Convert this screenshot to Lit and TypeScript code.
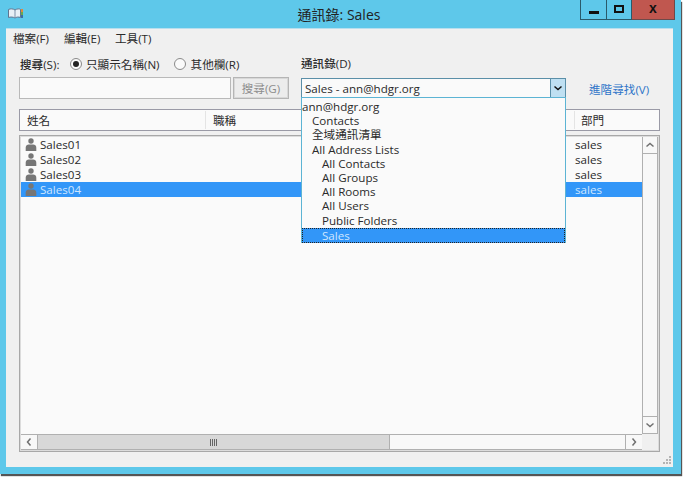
import { LitElement, html, css, svg } from "lit";
import { customElement } from "lit/decorators.js";

const chevron = (dir: string, color = "#707070") => {
  const pts: Record<string, string> = {
    up: "1.5,5.5 5,2.5 8.5,5.5",
    down: "1.5,2.5 5,5.5 8.5,2.5",
    left: "5.5,1.5 2.5,5 5.5,8.5",
    right: "2.5,1.5 5.5,5 2.5,8.5",
  };
  const size = dir === "up" || dir === "down" ? { w: 10, h: 8 } : { w: 8, h: 10 };
  return html`<svg width=${size.w} height=${size.h} viewBox="0 0 ${size.w} ${size.h}">
    ${svg`<polyline points=${pts[dir]} fill="none" stroke=${color} stroke-width="1.5"/>`}
  </svg>`;
};

const person = html`<svg class="person" width="12" height="13" viewBox="0 0 12 13">
  <circle cx="6" cy="3" r="2.7" fill="#767676"/>
  <path d="M.7 13v-3.2C.7 7.8 2.2 6.6 3.8 6.6h4.4c1.6 0 3.1 1.2 3.1 3.2V13z" fill="#767676"/>
</svg>`;

@customElement("app-root")
export class AppRoot extends LitElement {
  static styles = css`
    :host {
      display: block;
      width: 684px;
      height: 478px;
      background: #fff;
      font-family: "Open Sans", "Noto Sans CJK TC", sans-serif;
      font-size: 11.6px;
      color: #2a2a2a;
      overflow: hidden;
    }
    .window {
      width: 681px;
      height: 474px;
      box-sizing: border-box;
      background: #5ec8ea;
      padding: 0 8px 7px 6px;
      display: flex;
      flex-direction: column;
      box-shadow: 1px 2px 1px #555;
    }
    .titlebar {
      height: 28px;
      flex: none;
      display: grid;
      grid-template-columns: 1fr auto 1fr;
      margin-left: -6px;
      margin-right: -8px;
    }
    .book { margin: 8px 0 0 8px; display: block; }
    .title {
      font-size: 14px;
      line-height: 18px;
      padding-top: 6px;
      color: #222;
      margin-right: 3px;
    }
    .caption { display: flex; justify-content: flex-end; padding-right: 6px; align-items: flex-start; }
    .cbtn {
      height: 20px;
      box-sizing: border-box;
      border: 1px solid #2a5a6a;
      border-top: none;
      display: flex;
      align-items: center;
      justify-content: center;
    }
    .cbtn + .cbtn { border-left: none; }
    .min { width: 27px; }
    .min i { display: block; width: 10px; height: 3px; background: #111; margin-top: 5px; }
    .max { width: 25px; }
    .max i { display: block; width: 10px; height: 8px; box-sizing: border-box; border: 2px solid #111; margin-bottom: 2px; }
    .close { width: 43px; background: #c0574f; border-color: #6e4a4a; font: bold 14px/1 "Liberation Sans", sans-serif; color: #111; padding-bottom: 3px; }

    .body {
      flex: 1;
      min-height: 0;
      background: #f0f0f0;
      border-top: 1px solid #b8dfee;
      padding: 0 13px 15px 13px;
      display: flex;
      flex-direction: column;
    }
    .menu { display: flex; height: 18px; margin-left: -6px; align-items: center; flex: none; }
    .menu span { white-space: nowrap; width: 51px; }

    .toolbar { display: flex; margin-top: 9px; flex: none; }
    .left { width: 282px; flex: none; }
    .opts { display: flex; align-items: center; height: 16px; white-space: nowrap; }
    .label { font-weight: 500; width: 50px; padding-left: 1px; }
    .radio { display: flex; align-items: center; gap: 4px; }
    .radio + .radio { margin-left: 14px; }
    .radio + .radio .dot { margin-right: 1px; }
    .dot {
      width: 12px; height: 12px; box-sizing: border-box;
      border: 1px solid #8a8a8a; border-radius: 50%; background: #fafafa;
      display: flex; align-items: center; justify-content: center;
    }
    .dot.on::after { content: ""; width: 6px; height: 6px; border-radius: 50%; background: #222; }
    .searchrow { display: flex; gap: 2px; margin-top: 5px; }
    .input { width: 212px; height: 22px; box-sizing: border-box; background: #fafafa; border: 1px solid #b9b9b9; }
    .btn {
      width: 56px; height: 22px; box-sizing: border-box;
      border: 1px solid #b5b5b5; background: #ececec; outline: 1px solid #d8d8d8; outline-offset: -2px;
      color: #8c8c8c; display: flex; align-items: center; justify-content: center; white-space: nowrap;
    }
    .right { flex: none; }
    .rlabel { height: 16px; line-height: 16px; font-weight: 500; white-space: nowrap; }
    .comborow { display: flex; align-items: center; margin-top: 6px; }
    .combo {
      position: relative;
      width: 265px; height: 20px; box-sizing: border-box;
      background: #fafafa; border: 1px solid #5b8fa8;
      border-bottom-color: #3f97c4;
      display: flex; align-items: center;
    }
    .combo .val { flex: 1; padding-left: 3px; white-space: nowrap; }
    .combo .arrow {
      width: 15px; height: 18px; box-sizing: border-box; background: #bfe0f2; border-left: 1px solid #5b8fa8;
      display: flex; align-items: center; justify-content: center; flex: none;
    }
    .link { color: #2e74c8; margin-left: 23px; padding-top: 1px; white-space: nowrap; }
    .drop {
      position: absolute; z-index: 3;
      left: -1px; top: 18px; width: 265px; height: 146px; box-sizing: border-box;
      background: #fafafa; border: 1px solid #5cb4d4; padding-top: 2px;
      line-height: 14.2px;
    }
    .drop div { height: 14.2px; white-space: nowrap; }
    .l1 { padding-left: 10px; }
    .l2 { padding-left: 20px; }
    .drop .sel {
      height: 15px; line-height: 15px; box-sizing: border-box;
      background: #3296f8; color: #cfe6ff; outline: 1px dotted #222; outline-offset: -1px;
    }

    .head {
      margin-top: 10px; height: 22px; box-sizing: border-box; flex: none;
      background: #fafafa; border: 1px solid #9a9aa6;
      display: flex; align-items: center;
    }
    .head div { height: 18px; line-height: 20px; box-sizing: border-box; padding-left: 7px; border-right: 1px solid #e4e4e4; }
    .c1 { width: 186px; }
    .c2 { width: 369px; }
    .c3 { flex: 1; border-right: none !important; padding-left: 6px !important; }

    .list {
      margin-top: 4px; flex: 1; min-height: 0; box-sizing: border-box;
      border: 1px solid #a8a8a8; padding: 1px;
      background: #fafafa;
      display: grid;
      grid-template-columns: 1fr 16px;
      grid-template-rows: 1fr 16px;
      outline: 1px solid #dcdcdc; outline-offset: -2px;
    }
    .rows { min-height: 0; overflow: hidden; position: relative; z-index: 1; background: #fafafa; }
    .row { display: flex; align-items: center; height: 15px; white-space: nowrap; }
    .row .person { margin-left: 4px; margin-right: 3px; flex: none; }
    .row .n { flex: 1; }
    .row .d { width: 67px; flex: none; }
    .row.sel { background: #3296f8; color: #cfe6ff; }

    .vbar { display: flex; flex-direction: column; border-left: 1px solid #b0b0b0; border-right: 1px solid #b0b0b0; justify-content: space-between; background: #f8f8f8; }
    .vbtn { height: 16px; flex: none; display: flex; align-items: center; justify-content: center; background: #f8f8f8; }
    .vbtn.top { border-bottom: 1px solid #b0b0b0; }
    .vbtn.bot { border-top: 1px solid #b0b0b0; border-bottom: 1px solid #b0b0b0; }
    .hbar { display: flex; border-top: 1px solid #b0b0b0; border-bottom: 1px solid #b0b0b0; background: #f8f8f8; box-sizing: border-box; }
    .hbtn { width: 16px; flex: none; display: flex; align-items: center; justify-content: center; }
    .hbtn.l { border-right: 1px solid #b0b0b0; }
    .hbtn.r { border-left: 1px solid #b0b0b0; margin-left: auto; }
    .thumb { width: 351px; flex: none; background: #d8d8d8; border-right: 1px solid #b0b0b0; display: flex; align-items: center; justify-content: center; gap: 1px; }
    .thumb i { display: block; width: 1px; height: 7px; background: #666; }
    .corner { background: #f0f0f0; }

    .bodywrap { flex: 1; min-height: 0; display: flex; position: relative; }
    .bodywrap .body { width: 100%; box-sizing: border-box; }
    .grip { position: absolute; right: 2px; bottom: 3px; }
  `;

  private row(name: string, sel = false) {
    return html`<div class="row ${sel ? "sel" : ""}">${person}<span class="n">${name}</span><span class="d">sales</span></div>`;
  }

  render() {
    return html`
      <div class="window">
        <div class="titlebar">
          <svg class="book" width="15" height="11" viewBox="0 0 15 11">
            <path d="M.5 1.500C2.500.5 5 .7 7 2c2-1.300 4.500-1.500 5.500-.5V9.500C10.500 8.700 8.500 9 7 10 5.500 9 2.500 8.700.5 9.500z" fill="#e8f0f6" stroke="#5f7590"/>
            <path d="M7 2v8" stroke="#7f93aa"/>
            <rect x="13" y="1" width="2" height="3" fill="#e08a3c"/>
            <rect x="13" y="4" width="2" height="3" fill="#6aa84f"/>
            <rect x="13" y="7" width="2" height="3" fill="#3a6ea5"/>
          </svg>
          <div class="title">通訊錄: Sales</div>
          <div class="caption">
            <div class="cbtn min"><i></i></div>
            <div class="cbtn max"><i></i></div>
            <div class="cbtn close">x</div>
          </div>
        </div>
        <div class="bodywrap">
          <div class="body">
            <div class="menu"><span>檔案(F)</span><span>編輯(E)</span><span>工具(T)</span></div>
            <div class="toolbar">
              <div class="left">
                <div class="opts">
                  <span class="label">搜尋(S):</span>
                  <span class="radio"><span class="dot on"></span>只顯示名稱(N)</span>
                  <span class="radio"><span class="dot"></span>其他欄(R)</span>
                </div>
                <div class="searchrow"><div class="input"></div><div class="btn">搜尋(G)</div></div>
              </div>
              <div class="right">
                <div class="rlabel">通訊錄(D)</div>
                <div class="comborow">
                  <div class="combo">
                    <span class="val">Sales - ann@hdgr.org</span>
                    <span class="arrow">${chevron("down", "#111")}</span>
                    <div class="drop">
                      <div>ann@hdgr.org</div>
                      <div class="l1">Contacts</div>
                      <div class="l1">全域通訊清單</div>
                      <div class="l1">All Address Lists</div>
                      <div class="l2">All Contacts</div>
                      <div class="l2">All Groups</div>
                      <div class="l2">All Rooms</div>
                      <div class="l2">All Users</div>
                      <div class="l2">Public Folders</div>
                      <div class="l2 sel">Sales</div>
                    </div>
                  </div>
                  <span class="link">進階尋找(V)</span>
                </div>
              </div>
            </div>
            <div class="head"><div class="c1">姓名</div><div class="c2">職稱</div><div class="c3">部門</div></div>
            <div class="list">
              <div class="rows">
                ${this.row("Sales01")}${this.row("Sales02")}${this.row("Sales03")}${this.row("Sales04", true)}
              </div>
              <div class="vbar">
                <div class="vbtn top">${chevron("up")}</div>
                <div class="vbtn bot">${chevron("down")}</div>
              </div>
              <div class="hbar">
                <div class="hbtn l">${chevron("left")}</div>
                <div class="thumb"><i></i><i></i><i></i><i></i></div>
                <div class="hbtn r">${chevron("right")}</div>
              </div>
              <div class="corner"></div>
            </div>
          </div>
          <svg class="grip" width="9" height="9" viewBox="0 0 9 9" fill="#b4b4b4">
            <rect x="7" y="1" width="2" height="2"/><rect x="7" y="4" width="2" height="2"/><rect x="7" y="7" width="2" height="2"/>
            <rect x="4" y="4" width="2" height="2"/><rect x="4" y="7" width="2" height="2"/><rect x="1" y="7" width="2" height="2"/>
          </svg>
        </div>
      </div>
    `;
  }
}
